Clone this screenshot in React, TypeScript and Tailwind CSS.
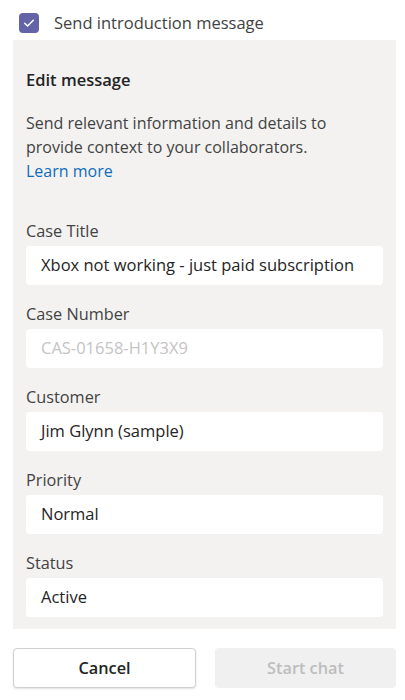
import React from "react";

const fields = [
  { label: "Case Title", value: "Xbox not working - just paid subscription", muted: false },
  { label: "Case Number", value: "CAS-01658-H1Y3X9", muted: true },
  { label: "Customer", value: "Jim Glynn (sample)", muted: false },
  { label: "Priority", value: "Normal", muted: false },
  { label: "Status", value: "Active", muted: false },
];

export default function App() {
  return (
    <div
      className="w-[405px] h-[700px] bg-white text-[#242424] overflow-hidden"
      style={{ fontFamily: '"Open Sans", "Noto Sans", sans-serif' }}
    >
      <div className="flex items-center h-[20px] mt-[13px] ml-[19px]">
        <div className="w-[20px] h-[20px] rounded-[4px] bg-[#6264a7] flex items-center justify-center">
          <svg width="14" height="14" viewBox="0 0 12 12" fill="none">
            <path d="M2.3 6.2 L4.8 8.6 L9.7 3.6" stroke="white" strokeWidth="1.3" strokeLinecap="round" strokeLinejoin="round" />
          </svg>
        </div>
        <span className="ml-[15px] text-[16.5px] leading-[20px] text-[#424242]">Send introduction message</span>
      </div>

      <div className="ml-[13px] w-[383px] mt-[7px] bg-[#f3f2f1] px-[13px] pt-[30px] pb-[12px]">
        <div className="text-[16.5px] leading-[20px] font-semibold text-[#242424]">Edit message</div>
        <div className="mt-[21px] text-[16px] leading-[24px] text-[#424242]">
          Send relevant information and details to provide context to your collaborators.
          <br />
          <a className="text-[#0f6cbd]">Learn more</a>
        </div>
        <div className="mt-[38px] flex flex-col gap-[19px]">
          {fields.map((f) => (
            <div key={f.label} className="flex flex-col">
              <div className="text-[16.3px] leading-[20px] text-[#424242]">{f.label}</div>
              <div
                className={
                  "mt-[5px] h-[39px] rounded-[4px] bg-white flex items-center px-[15px] text-[16.5px] " +
                  (f.muted ? "text-[#c4c4c4]" : "text-[#242424]")
                }
              >
                {f.value}
              </div>
            </div>
          ))}
        </div>
      </div>

      <div className="ml-[13px] w-[383px] mt-[19px] flex gap-[19px]">
        <button className="flex-1 h-[40px] rounded-[4px] bg-white border border-[#d1d1d1] shadow-[0_1px_2px_rgba(0,0,0,0.12)] text-[16.3px] font-semibold text-[#242424]">
          Cancel
        </button>
        <button className="flex-1 h-[40px] rounded-[4px] bg-[#f0f0f0] text-[16.3px] font-semibold text-[#bdbdbd]">
          Start chat
        </button>
      </div>
    </div>
  );
}
